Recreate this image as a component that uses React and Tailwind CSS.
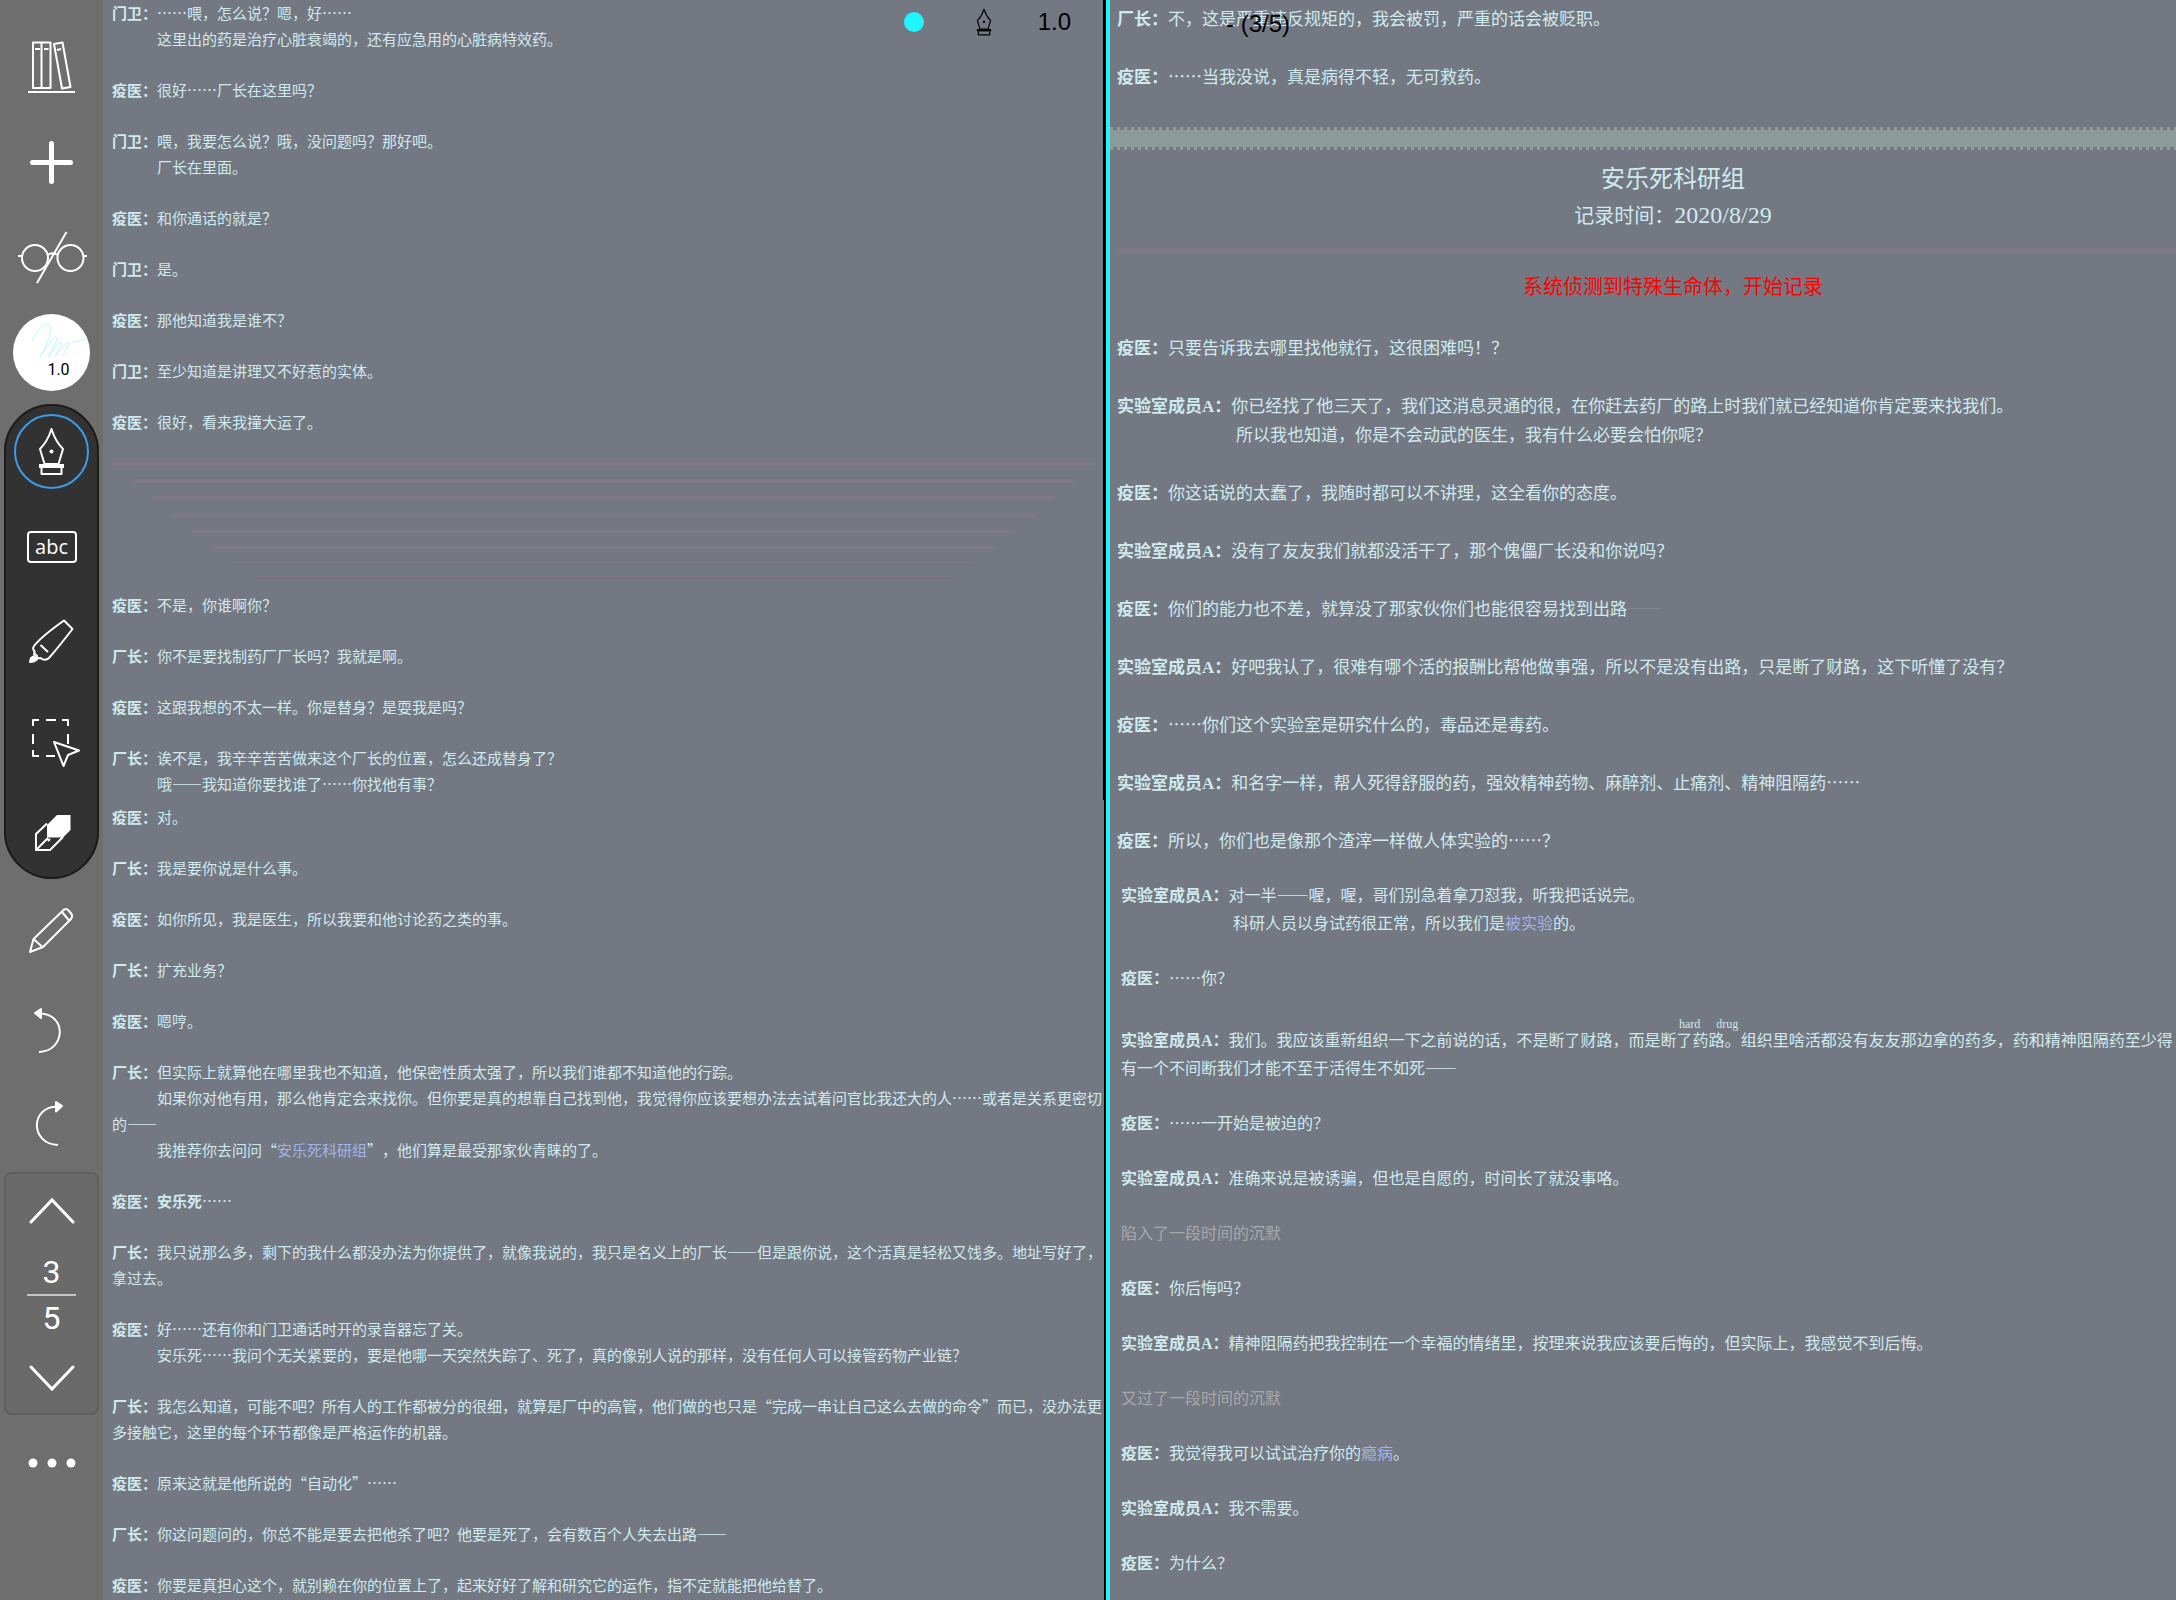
import React, { useState } from 'react';

const leftTop = [
  { who: '门卫', lines: ['……喂，怎么说？嗯，好……', '这里出的药是治疗心脏衰竭的，还有应急用的心脏病特效药。'] },
  { who: '疫医', lines: ['很好……厂长在这里吗？'] },
  { who: '门卫', lines: ['喂，我要怎么说？哦，没问题吗？那好吧。', '厂长在里面。'] },
  { who: '疫医', lines: ['和你通话的就是？'] },
  { who: '门卫', lines: ['是。'] },
  { who: '疫医', lines: ['那他知道我是谁不？'] },
  { who: '门卫', lines: ['至少知道是讲理又不好惹的实体。'] },
  { who: '疫医', lines: ['很好，看来我撞大运了。'] },
];

const leftMiddle = [
  { who: '疫医', lines: ['不是，你谁啊你？'] },
  { who: '厂长', lines: ['你不是要找制药厂厂长吗？我就是啊。'] },
  { who: '疫医', lines: ['这跟我想的不太一样。你是替身？是耍我是吗？'] },
  { who: '厂长', lines: ['诶不是，我辛辛苦苦做来这个厂长的位置，怎么还成替身了？', '哦——我知道你要找谁了……你找他有事？'] },
];

const leftBottom = [
  { who: '疫医', lines: ['对。'] },
  { who: '厂长', lines: ['我是要你说是什么事。'] },
  { who: '疫医', lines: ['如你所见，我是医生，所以我要和他讨论药之类的事。'] },
  { who: '厂长', lines: ['扩充业务？'] },
  { who: '疫医', lines: ['嗯哼。'] },
  {
    who: '厂长',
    lines: [
      '但实际上就算他在哪里我也不知道，他保密性质太强了，所以我们谁都不知道他的行踪。',
      '如果你对他有用，那么他肯定会来找你。但你要是真的想靠自己找到他，我觉得你应该要想办法去试着问官比我还大的人……或者是关系更密切的——',
      <>我推荐你去问问“<DocLink>安乐死科研组</DocLink>”，他们算是最受那家伙青睐的了。</>,
    ],
  },
  { who: '疫医', lines: [<><b className="font-bold">安乐死</b>……</>] },
  { who: '厂长', lines: ['我只说那么多，剩下的我什么都没办法为你提供了，就像我说的，我只是名义上的厂长——但是跟你说，这个活真是轻松又饯多。地址写好了，拿过去。'] },
  {
    who: '疫医',
    lines: [
      '好……还有你和门卫通话时开的录音器忘了关。',
      '安乐死……我问个无关紧要的，要是他哪一天突然失踪了、死了，真的像别人说的那样，没有任何人可以接管药物产业链？',
    ],
  },
  { who: '厂长', lines: ['我怎么知道，可能不吧？所有人的工作都被分的很细，就算是厂中的高管，他们做的也只是“完成一串让自己这么去做的命令”而已，没办法更多接触它，这里的每个环节都像是严格运作的机器。'] },
  { who: '疫医', lines: ['原来这就是他所说的“自动化”……'] },
  { who: '厂长', lines: ['你这问题问的，你总不能是要去把他杀了吧？他要是死了，会有数百个人失去出路——'] },
  { who: '疫医', lines: ['你要是真担心这个，就别赖在你的位置上了，起来好好了解和研究它的运作，指不定就能把他给替了。'] },
];

const member = <>实验室成员<span className="font-['Liberation_Serif',serif] leading-none">A</span></>;

const rightTop = [
  { who: '厂长', lines: ['不，这是严重违反规矩的，我会被罚，严重的话会被贬职。'] },
  { who: '疫医', lines: ['……当我没说，真是病得不轻，无可救药。'] },
];

const rightMiddle = [
  { who: '疫医', lines: ['只要告诉我去哪里找他就行，这很困难吗！？'] },
  { who: member, lines: ['你已经找了他三天了，我们这消息灵通的很，在你赶去药厂的路上时我们就已经知道你肯定要来找我们。', '所以我也知道，你是不会动武的医生，我有什么必要会怕你呢？'] },
  { who: '疫医', lines: ['你这话说的太蠢了，我随时都可以不讲理，这全看你的态度。'] },
  { who: member, lines: ['没有了友友我们就都没活干了，那个傀儡厂长没和你说吗？'] },
  { who: '疫医', lines: [<>你们的能力也不差，就算没了那家伙你们也能很容易找到出路<span className="text-[#868d97]">——</span></>] },
  { who: member, lines: ['好吧我认了，很难有哪个活的报酬比帮他做事强，所以不是没有出路，只是断了财路，这下听懂了没有？'] },
  { who: '疫医', lines: ['……你们这个实验室是研究什么的，毒品还是毒药。'] },
  { who: member, lines: ['和名字一样，帮人死得舒服的药，强效精神药物、麻醉剂、止痛剂、精神阻隔药……'] },
  { who: '疫医', lines: ['所以，你们也是像那个渣滓一样做人体实验的……？'] },
];

const rightBottom = [
  { who: member, lines: ['对一半——喔，喔，哥们别急着拿刀怼我，听我把话说完。', <>科研人员以身试药很正常，所以我们是<DocLink>被实验</DocLink>的。</>] },
  { who: '疫医', lines: ['……你？'] },
  {
    who: member,
    lines: [
      <>
        我们。我应该重新组织一下之前说的话，不是断了财路，而是断
        <ruby>了药路。<rt className="whitespace-pre font-['Liberation_Serif',serif] text-xs leading-3">hard{'  '}drug</rt></ruby>
        组织里啥活都没有友友那边拿的药多，药和精神阻隔药至少得有一个不间断我们才能不至于活得生不如死——
      </>,
    ],
  },
  { who: '疫医', lines: ['……一开始是被迫的？'] },
  { who: member, lines: ['准确来说是被诱骗，但也是自愿的，时间长了就没事咯。'] },
  { note: '陷入了一段时间的沉默' },
  { who: '疫医', lines: ['你后悔吗？'] },
  { who: member, lines: ['精神阻隔药把我控制在一个幸福的情绪里，按理来说我应该要后悔的，但实际上，我感觉不到后悔。'] },
  { note: '又过了一段时间的沉默' },
  { who: '疫医', lines: [<>我觉得我可以试试治疗你的<DocLink>瘾病</DocLink>。</>] },
  { who: member, lines: ['我不需要。'] },
  { who: '疫医', lines: ['为什么？'] },
];

// rules under the first log, each one shorter and thinner than the last
const fadingRules = [
  'h-1 mx-0',
  'h-1 mx-5',
  'h-1 mx-10',
  'h-1 mx-15',
  'h-[3px] mx-20',
  'h-[3px] mx-25',
  'h-px mx-30',
  'h-px mx-35',
];

function DocLink({ children }) {
  return <a href="#" className="text-[#a2b4ea]">{children}</a>;
}

function Dialogue({ entries, className }) {
  return (
    <div className={`flex flex-col ${className}`}>
      {entries.map((entry, i) =>
        entry.note ? (
          <p key={i} className="text-[#a6a8ac]">{entry.note}</p>
        ) : (
          <div key={i}>
            {entry.lines.map((line, j) => (
              <p key={j} className={j === 0 ? '' : typeof entry.who === 'string' ? 'indent-[3em]' : 'indent-[7em]'}>
                {j === 0 && <b className="font-bold">{entry.who}：</b>}
                {line}
              </p>
            ))}
          </div>
        )
      )}
    </div>
  );
}

function ToolButton({ label, onClick, children }) {
  return (
    <button aria-label={label} onClick={onClick} className="flex h-[95px] w-[95px] items-center justify-center">
      {children}
    </button>
  );
}

function Icon({ children, width = 2 }) {
  return (
    <svg viewBox="0 0 95 95" className="h-[95px] w-[95px]" fill="none" stroke="#fff" strokeWidth={width} strokeLinejoin="round">
      {children}
    </svg>
  );
}

function Nib({ className }) {
  return (
    <svg viewBox="34 25 27 49" className={className} fill="none" stroke="currentColor" strokeWidth="2" strokeLinejoin="round">
      <path d="M47.5 27 C45 35 41 42 36 47 L40.5 62 H54.5 L59 47 C54 42 50 35 47.5 27 Z" />
      <circle cx="47.5" cy="49.5" r="2" fill="currentColor" stroke="none" />
      <path d="M35 64 H60" strokeWidth="4" />
      <path d="M37.5 66 V72 H57.5 V66" />
    </svg>
  );
}

function Sidebar() {
  const [page, setPage] = useState(3);

  return (
    <aside className="flex w-[103px] shrink-0 flex-col items-center bg-[#6e6e6e] pt-5 text-white">
      <ToolButton label="Library">
        <Icon>
          <path d="M29 22.5 H37.5 V68 H29 Z M37.5 22.5 H46.5 V68 H37.5 Z" />
          <path d="M50 24 L58.5 22.5 L66.5 67 L58 68.5 Z M53 30 L57 29 M31 29 H36 M40 29 H44.5" />
          <path d="M24 72 H71" />
        </Icon>
      </ToolButton>
      <ToolButton label="Add">
        <Icon width={5}>
          <path d="M28.5 47.5 H66.5 M47.5 28.5 V66.5" strokeLinecap="round" />
        </Icon>
      </ToolButton>
      <ToolButton label="View mode">
        <Icon>
          <circle cx="31" cy="48" r="13" />
          <circle cx="66.5" cy="48" r="13" />
          <path d="M14 46 H18 M79.5 46 H83 M43.5 45 Q48.5 41.5 54 45 M62.5 22 L33 73" />
        </Icon>
      </ToolButton>
      <div className="flex h-[95px] items-center">
        <button className="flex h-[77px] w-[77px] flex-col items-center rounded-full bg-white font-[Roboto,sans-serif] text-base text-black">
          <svg viewBox="0 0 77 46" className="h-[46px] w-[77px] shrink-0" fill="none" stroke="#bdf7fb" strokeWidth="1">
            <path d="M19 27 C24 16 32 8 36 10 C42 14 32 34 27 43 C33 34 40 23 43 23 C46 25 38 38 35 43 C40 36 45 28 48 28 C50 29 45 37 42 42 C47 36 53 29 56 29 C57 31 52 37 50 41 M58 29 L73 25" />
          </svg>
          <span className="pl-[14px] leading-5">1.0</span>
        </button>
      </div>

      {/* Drawing tools */}
      <div className="mt-1 flex w-[95px] flex-col items-center rounded-full bg-[#323232] outline-2 -outline-offset-2 outline-[#1c1c1c]">
        <ToolButton label="Pen">
          <span className="flex h-[75px] w-[75px] items-center justify-center rounded-full border-2 border-[#3f9ce8]">
            <Nib className="h-[49px] w-[27px]" />
          </span>
        </ToolButton>
        <button className="flex h-[95px] w-[95px] items-center justify-center">
          <span className="flex h-8 w-[50px] items-center justify-center rounded-sm border-2 border-white font-['Open_Sans',sans-serif] text-xl leading-6">abc</span>
        </button>
        <ToolButton label="Highlighter">
          <Icon>
            <path d="M60 26.5 L68.5 35 C60 46 52 56 45 64 Q41 67.5 36.5 64 Q34 65 33 63 Q33.5 61 30 60 Q31.5 58 29.5 56 Q28.5 54 30 52 C37 43 48 35 60 26.5 Z" />
            <path d="M36.5 51 L44 58" />
            <path d="M30 62 L33 65.5 L30 67.5 L26 68 L27 64 Z" fill="#fff" />
          </Icon>
        </ToolButton>
        <ToolButton label="Select">
          <Icon>
            <path d="M29 37 V31 H35 M42 31 H52 M58 31 H64 V37 M29 45 V55 M29 61 V67 H35 M42 67 H51 M64 45 V55" />
            <path d="M50 53 L75 61.5 L64 66 L59.5 77 Z" fill="#323232" />
          </Icon>
        </ToolButton>
        <ToolButton label="Eraser">
          <Icon>
            <path d="M53 31 H66.5 V46 L59 53.5 H43 V41 Z" fill="#fff" stroke="none" />
            <path d="M43 39.5 L32 50 V66 H46 L59 53 M33 65 L44 54 M44 57 L46 55" />
          </Icon>
        </ToolButton>
      </div>

      <div className="mt-1">
        <ToolButton label="Pencil">
          <Icon>
            <path d="M26 69 L29.5 56 L58.5 28 Q62 24 65 28 L67.5 31 Q69 33.5 67 36 L39 64 Z M29.5 56 L38.5 64 M58 29 L65.5 38" />
          </Icon>
        </ToolButton>
        <ToolButton label="Undo">
          <Icon>
            <path d="M35 74 C62 73 63 36 36 35.5" />
            <path d="M31 35 L37 31 V40 Z" fill="#fff" />
          </Icon>
        </ToolButton>
        <ToolButton label="Redo">
          <Icon>
            <path d="M54 72 C26 71 26 34 53 33.5" />
            <path d="M58 33 L52 29 V38.5 Z" fill="#fff" />
          </Icon>
        </ToolButton>
      </div>

      {/* Page stepper */}
      <div className="mt-1 flex w-[95px] flex-col items-center rounded-lg bg-[#6a6a6a] font-[Roboto,sans-serif] text-[32px] leading-[44px] outline-2 -outline-offset-2 outline-[#5f5f5f]">
        <button aria-label="Previous page" onClick={() => setPage(Math.max(1, page - 1))} className="flex h-[78px] w-full items-center justify-center">
          <svg viewBox="0 0 46 28" className="h-7 w-[46px]" fill="none" stroke="#fff" strokeWidth="3" strokeLinecap="round">
            <path d="M2 25 L23 3 L44 25" />
          </svg>
        </button>
        <span>{page}</span>
        <div className="h-[2px] w-[49px] bg-[#c6c6c6]" />
        <span>5</span>
        <button aria-label="Next page" onClick={() => setPage(Math.min(5, page + 1))} className="flex h-[75px] w-full items-center justify-center">
          <svg viewBox="0 0 46 28" className="h-7 w-[46px]" fill="none" stroke="#fff" strokeWidth="3" strokeLinecap="round">
            <path d="M2 3 L23 25 L44 3" />
          </svg>
        </button>
      </div>
      <ToolButton label="More">
        <svg viewBox="0 0 48 10" className="h-[10px] w-12" fill="#fff">
          <circle cx="5" cy="5" r="4.5" />
          <circle cx="24" cy="5" r="4.5" />
          <circle cx="43" cy="5" r="4.5" />
        </svg>
      </ToolButton>
    </aside>
  );
}

export default function App() {
  return (
    <div lang="zh-CN" className="flex min-h-screen overflow-hidden bg-[#747882] font-['Noto_Sans_CJK_SC',sans-serif] text-[#cfeaee] [text-spacing-trim:space-all]">
      <Sidebar />
      <div className="grid min-w-0 flex-1 grid-cols-[1000fr_7px_1066fr]">
        {/* Left page */}
        <main className="relative min-w-0 pl-[9px] text-[15px] leading-[26px]">
          <Dialogue entries={leftTop} className="gap-[25px]" />
          <div className="mt-[27px] mr-2 mb-[15px] flex flex-col gap-[13px]">
            {fadingRules.map((rule) => (
              <div key={rule} className={`bg-[#7f7888] ${rule}`} />
            ))}
          </div>
          <Dialogue entries={leftMiddle} className="gap-[25px]" />
          <Dialogue entries={leftBottom} className="mt-[7px] gap-[25px]" />

          <div className="absolute top-0 right-8 flex h-11 items-center gap-[46px] font-['Liberation_Sans',sans-serif] text-2xl text-black">
            <span className="mr-1.5 h-5 w-5 rounded-full bg-[#1ff4ff]" />
            <Nib className="h-[28px] w-4" />
            <span>1.0</span>
          </div>
        </main>

        <div className="flex">
          <div className="flex w-[3px] flex-col items-end">
            <div className="h-1/2 w-[3px] bg-black" />
            <div className="h-1/2 w-[2px] bg-black" />
          </div>
          <div className="w-1 bg-[#1ff4ff]" />
        </div>

        {/* Right page */}
        <section className="relative min-w-0 pt-[3px] text-[17px] leading-[29px]">
          <Dialogue entries={rightTop} className="gap-[29px] pl-[7px]" />

          <div className="mt-[37px]">
            <div className="h-[3px] bg-[repeating-linear-gradient(90deg,#979a96_0_3px,transparent_3px_7px)]" />
            <div className="h-[17px] bg-[#8b9b99]" />
            <div className="h-[3px] bg-[repeating-linear-gradient(90deg,#979a96_0_3px,transparent_3px_7px)]" />
          </div>

          <header className="mt-[9px] pl-[60px] text-center">
            <h1 className="text-2xl leading-9">安乐死科研组</h1>
            <p className="text-xl leading-10">
              记录时间：<span className="font-['Liberation_Serif',serif] text-2xl leading-none">2020/8/29</span>
            </p>
          </header>
          <div className="mt-[13px] ml-[7px] h-[6px] bg-[#7f7888]" />
          <p className="mt-3 pl-[60px] text-center text-xl leading-10 text-[#ff0000]">系统侦测到特殊生命体，开始记录</p>

          <Dialogue entries={rightMiddle} className="mt-[26px] gap-[29px] pl-[7px]" />
          <Dialogue entries={rightBottom} className="mt-[26px] gap-[27px] pl-[11px] text-base leading-7" />

          <span className="absolute top-0 left-[116px] flex h-12 items-center font-['Liberation_Sans',sans-serif] text-2xl text-black">- (3/5)</span>
        </section>
      </div>
    </div>
  );
}
